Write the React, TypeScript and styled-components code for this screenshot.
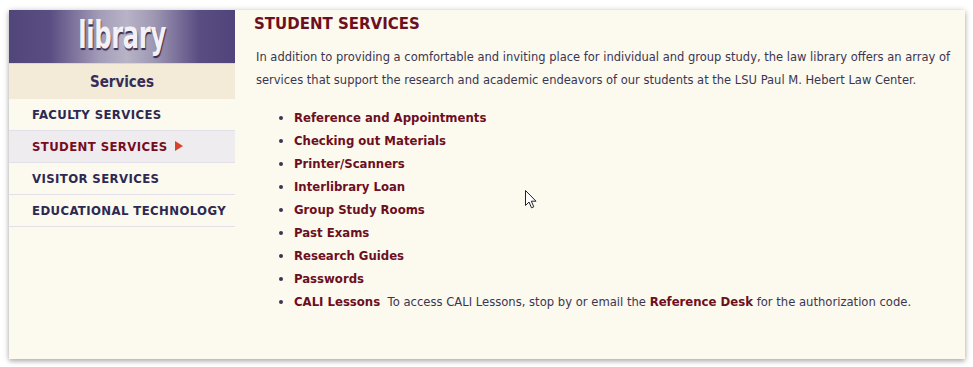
import React from "react";
import { styled, createGlobalStyle } from "styled-components";

const GlobalStyle = createGlobalStyle`
  html, body {
    margin: 0;
    padding: 0;
    background: #ffffff;
  }
  body {
    font-family: "DejaVu Sans Condensed", "DejaVu Sans", sans-serif;
  }
`;

const Page = styled.div`
  padding: 10px 8px 8px 9px;
`;

const Card = styled.div`
  position: relative;
  display: flex;
  width: 956px;
  height: 349px;
  background: #fcf9ee;
  box-shadow: 0 1px 6px rgba(0, 0, 0, 0.28), 0 3px 4px rgba(0, 0, 0, 0.12);
`;

const Sidebar = styled.nav`
  width: 226px;
  flex-shrink: 0;
  display: flex;
  flex-direction: column;
`;

const Banner = styled.div`
  height: 53px;
  display: flex;
  align-items: center;
  justify-content: center;
  overflow: hidden;
  background: linear-gradient(
    to right,
    #52457a 0%,
    #5a4d82 18%,
    #a39cb8 40%,
    #b9b3c7 52%,
    #9f98b4 64%,
    #5a4d82 84%,
    #51447a 100%
  );
  border-bottom: 1px solid #d9d3e2;
`;

const BannerText = styled.span`
  font-family: "DejaVu Sans Condensed", sans-serif;
  font-weight: bold;
  font-size: 37px;
  line-height: 1;
  letter-spacing: -0.5px;
  color: #f3f1f6;
  text-shadow: 1px 2px 1px rgba(35, 25, 60, 0.85);
  transform: scaleX(0.73);
  margin-top: -3px;
`;

const SectionHead = styled.div`
  height: 35px;
  background: #f3ebd7;
  display: flex;
  align-items: center;
  justify-content: center;
  font-weight: bold;
  font-size: 15px;
  color: #352d57;
`;

const MenuItem = styled.a<{ $active?: boolean }>`
  display: flex;
  align-items: center;
  gap: 7px;
  height: 31px;
  padding-left: 23px;
  border-bottom: 1px solid #e4e0ea;
  background: ${(p) => (p.$active ? "#efecf0" : "transparent")};
  color: ${(p) => (p.$active ? "#760d1f" : "#2c2952")};
  font-weight: bold;
  font-size: 13px;
  letter-spacing: 0.4px;
  text-decoration: none;
`;

const Arrow = styled.span`
  width: 0;
  height: 0;
  border-top: 5px solid transparent;
  border-bottom: 5px solid transparent;
  border-left: 8px solid #d9432b;
  margin-top: -1px;
`;

const Main = styled.main`
  flex: 1;
  padding: 4px 8px 0 19px;
`;

const Title = styled.h2`
  margin: 0;
  font-family: "DejaVu Sans", sans-serif;
  font-size: 15px;
  line-height: 20px;
  font-weight: bold;
  color: #6c0f1f;
`;

const Intro = styled.p`
  margin: 12px 0 0 2px;
  font-family: "DejaVu Sans", sans-serif;
  font-size: 11.5px;
  line-height: 23px;
  color: #3a3652;
`;

const List = styled.ul`
  margin: 14px 0 0;
  padding-left: 40px;
  list-style: disc;
  color: #3a3652;

  li {
    height: 23px;
    font-size: 13px;
    line-height: 23px;
  }
  li::marker {
    font-size: 14px;
  }
`;

const Link = styled.a`
  font-family: "DejaVu Sans Condensed", sans-serif;
  color: #6c0f1f;
  font-weight: bold;
  font-size: 13px;
  text-decoration: none;
`;

const Note = styled.span`
  font-family: "DejaVu Sans", sans-serif;
  font-size: 11.6px;
  color: #3a3652;
`;

const Cursor = styled.svg`
  position: absolute;
  left: 516px;
  top: 180px;
`;

const links = [
  "Reference and Appointments",
  "Checking out Materials",
  "Printer/Scanners",
  "Interlibrary Loan",
  "Group Study Rooms",
  "Past Exams",
  "Research Guides",
  "Passwords",
];

const menu = [
  { label: "FACULTY SERVICES" },
  { label: "STUDENT SERVICES", active: true },
  { label: "VISITOR SERVICES" },
  { label: "EDUCATIONAL TECHNOLOGY" },
];

const App = () => {
  return (
    <Page>
      <GlobalStyle />
      <Card>
        <Sidebar>
          <Banner>
            <BannerText>library</BannerText>
          </Banner>
          <SectionHead>Services</SectionHead>
          {menu.map((m) => (
            <MenuItem key={m.label} href="#" $active={m.active}>
              {m.label}
              {m.active && <Arrow />}
            </MenuItem>
          ))}
        </Sidebar>
        <Main>
          <Title>STUDENT SERVICES</Title>
          <Intro>
            In addition to providing a comfortable and inviting place for individual and group
            study, the law library offers an array of services that support the research and
            academic endeavors of our students at the LSU Paul M. Hebert Law Center.
          </Intro>
          <List>
            {links.map((l) => (
              <li key={l}>
                <Link href="#">{l}</Link>
              </li>
            ))}
            <li>
              <Link href="#">CALI Lessons</Link>
              <Note>
                {"\u00a0 To access CALI Lessons, stop by or email the "}
                <Link href="#">Reference Desk</Link> for the authorization code.
              </Note>
            </li>
          </List>
        </Main>
        <Cursor width="12" height="19" viewBox="0 0 12 19">
          <path
            d="M0.5 0.5 L0.5 15.5 L4 12 L6.5 17.8 L8.8 16.8 L6.3 11.2 L11 11.2 Z"
            fill="#fff"
            stroke="#222"
            strokeWidth="1"
            strokeLinejoin="round"
          />
        </Cursor>
      </Card>
    </Page>
  );
};

export default App;
